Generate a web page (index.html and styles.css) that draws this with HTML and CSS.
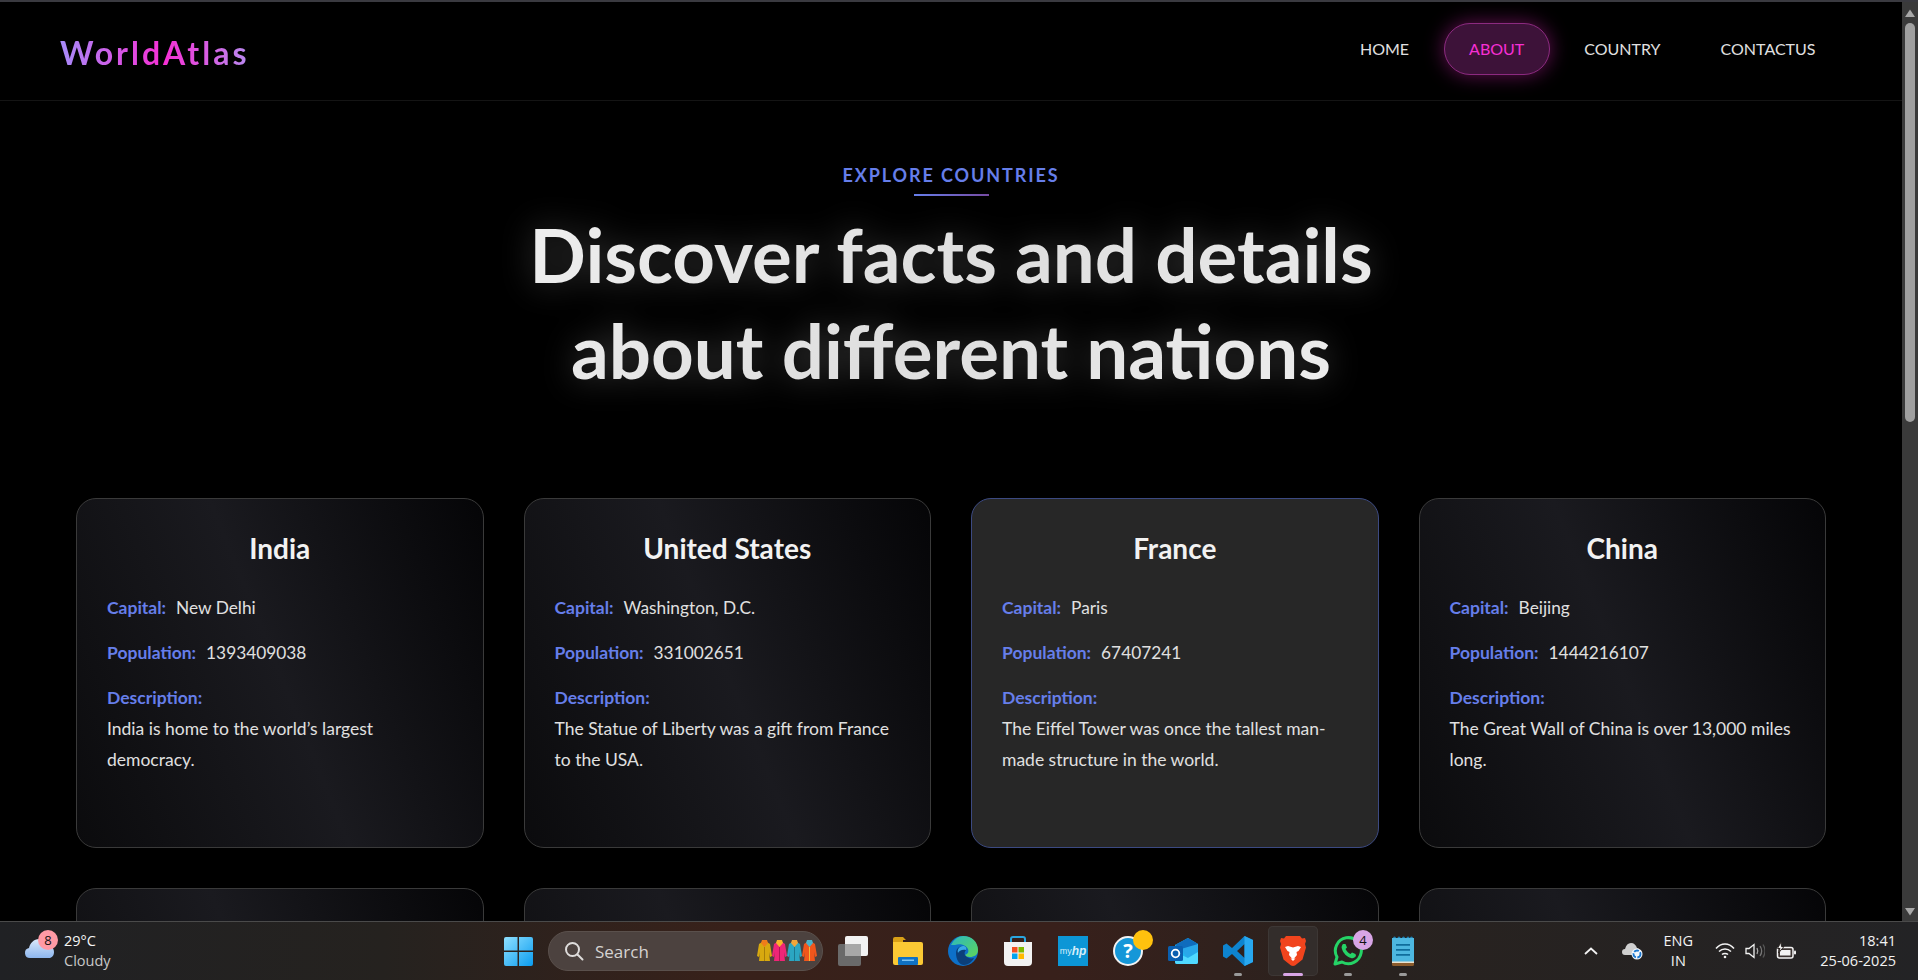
FILE: index.html
```html
<!DOCTYPE html>
<html>

<head>
    <title>WorldAtlas</title>
    <link rel="stylesheet" href="styles.css">
</head>

<body>
    <div class="browser">
        <div class="page">
            <header class="site-header">
                <div class="logo">WorldAtlas</div>
                <nav class="site-nav">
                    <a class="nav-link">HOME</a>
                    <a class="nav-link active">ABOUT</a>
                    <a class="nav-link">COUNTRY</a>
                    <a class="nav-link">CONTACTUS</a>
                </nav>
            </header>

            <section class="hero">
                <p class="eyebrow">EXPLORE COUNTRIES</p>
                <div class="eyebrow-line"></div>
                <h1>Discover facts and details<br>about different nations</h1>
            </section>

            <section class="country-grid">
                <article class="card">
                    <h2>India</h2>
                    <p class="row"><span class="label">Capital:</span><span>New Delhi</span></p>
                    <p class="row"><span class="label">Population:</span><span>1393409038</span></p>
                    <p class="label desc-label">Description:</p>
                    <p class="desc">India is home to the world’s largest democracy.</p>
                </article>
                <article class="card">
                    <h2>United States</h2>
                    <p class="row"><span class="label">Capital:</span><span>Washington, D.C.</span></p>
                    <p class="row"><span class="label">Population:</span><span>331002651</span></p>
                    <p class="label desc-label">Description:</p>
                    <p class="desc">The Statue of Liberty was a gift from France to the USA.</p>
                </article>
                <article class="card hover">
                    <h2>France</h2>
                    <p class="row"><span class="label">Capital:</span><span>Paris</span></p>
                    <p class="row"><span class="label">Population:</span><span>67407241</span></p>
                    <p class="label desc-label">Description:</p>
                    <p class="desc">The Eiffel Tower was once the tallest man-made structure in the world.</p>
                </article>
                <article class="card">
                    <h2>China</h2>
                    <p class="row"><span class="label">Capital:</span><span>Beijing</span></p>
                    <p class="row"><span class="label">Population:</span><span>1444216107</span></p>
                    <p class="label desc-label">Description:</p>
                    <p class="desc">The Great Wall of China is over 13,000 miles long.</p>
                </article>
                <article class="card"></article>
                <article class="card"></article>
                <article class="card"></article>
                <article class="card"></article>
            </section>
        </div>

        <div class="scrollbar">
            <svg class="arrow" width="10" height="8" viewBox="0 0 10 8"><path d="M5 0.5 10 8H0z" fill="#a8a8a8"/></svg>
            <div class="thumb"></div>
            <div class="track-rest"></div>
            <svg class="arrow" width="10" height="8" viewBox="0 0 10 8"><path d="M5 7.5 10 0H0z" fill="#a8a8a8"/></svg>
        </div>
    </div>

    <footer class="taskbar">
        <div class="tb-left">
            <div class="weather-icon">
                <svg width="32" height="24" viewBox="0 0 32 24">
                    <defs>
                        <linearGradient id="cloudFill" x1="0" y1="0" x2="0" y2="1">
                            <stop offset="0" stop-color="#dbe9fb"/>
                            <stop offset="1" stop-color="#8db6ee"/>
                        </linearGradient>
                    </defs>
                    <path d="M6 23a5 5 0 0 1-1-9.900C6 8 10 4 15 4c4 0 7 2 8.500 5.500C27 10 30 13 30 17c0 3.500-2 6-5 6z" fill="url(#cloudFill)"/>
                </svg>
                <span class="weather-badge">8</span>
            </div>
            <div class="weather-text">
                <span class="temp">29°C</span>
                <span class="sky">Cloudy</span>
            </div>
        </div>

        <div class="tb-center">
            <div class="tb-item">
                <svg width="29" height="29" viewBox="0 0 30 30">
                    <defs>
                        <linearGradient id="winFill" x1="0" y1="0" x2="1" y2="1">
                            <stop offset="0" stop-color="#8fe0ff"/>
                            <stop offset="1" stop-color="#0a9cf0"/>
                        </linearGradient>
                    </defs>
                    <path d="M2 0h12v14H0V2a2 2 0 0 1 2-2zM15.500 0H28a2 2 0 0 1 2 2v12H15.500zM0 15.500h14V30H2a2 2 0 0 1-2-2zM15.500 15.500H30V28a2 2 0 0 1-2 2H15.500z" fill="url(#winFill)"/>
                </svg>
            </div>

            <div class="search-box">
                <svg width="20" height="20" viewBox="0 0 20 20" fill="none" stroke="#dedcdb" stroke-width="2"><circle cx="8.500" cy="8.500" r="6.500"/><path d="M13.500 13.500 18.500 18.500" stroke-linecap="round"/></svg>
                <span class="search-text">Search</span>
                <svg class="coats" width="60" height="22" viewBox="0 0 60 22">
                    <g>
                        <path d="M5 2h5l3 2 2 12-2 1-1-5 1 9H2l1-9-1 5-2-1L2 4z" fill="#d8a90f"/>
                        <path d="M5 0h5l1 3-3.500 4L4 3z" fill="#ef7d1a"/>
                        <path d="M7 7h1v14H7z" fill="#a87f08"/>
                    </g>
                    <g transform="translate(15)">
                        <path d="M5 2h5l3 2 2 12-2 1-1-5 1 9H2l1-9-1 5-2-1L2 4z" fill="#ef2577"/>
                        <path d="M5 0h5l1 3-3.500 4L4 3z" fill="#f7b32b"/>
                        <path d="M7 7h1v14H7z" fill="#b01556"/>
                    </g>
                    <g transform="translate(30)">
                        <path d="M5 2h5l3 2 2 12-2 1-1-5 1 9H2l1-9-1 5-2-1L2 4z" fill="#2ba6c2"/>
                        <path d="M5 0h5l1 3-3.500 4L4 3z" fill="#f0a63a"/>
                        <path d="M7 7h1v14H7z" fill="#1b7890"/>
                    </g>
                    <g transform="translate(45)">
                        <path d="M5 2h5l3 2 2 12-2 1-1-5 1 9H2l1-9-1 5-2-1L2 4z" fill="#f0561c"/>
                        <path d="M5 0h5l1 3-3.500 4L4 3z" fill="#4ab3c9"/>
                        <path d="M7 7h1v14H7z" fill="#f2b63a"/>
                    </g>
                </svg>
            </div>

            <div class="tb-item">
                <svg width="30" height="30" viewBox="0 0 30 30">
                    <rect x="0" y="8" width="23" height="22" rx="2" fill="#6a6a6a"/>
                    <rect x="7" y="0" width="23" height="20" rx="2" fill="#f2f2f2"/>
                    <rect x="7" y="8" width="16" height="12" fill="#a8a8a8"/>
                </svg>
            </div>

            <div class="tb-item">
                <svg width="30" height="28" viewBox="0 0 30 28">
                    <path d="M0 2a2 2 0 0 1 2-2h8l3 3h-3v3H0z" fill="#d9a017"/>
                    <path d="M0 5h28a2 2 0 0 1 2 2v19a2 2 0 0 1-2 2H2a2 2 0 0 1-2-2z" fill="#fbc934"/>
                    <rect x="5" y="20" width="20" height="8" rx="1" fill="#0f72c4"/>
                    <rect x="9" y="22.500" width="12" height="1.500" fill="#7cc4f5"/>
                </svg>
            </div>

            <div class="tb-item">
                <svg width="30" height="30" viewBox="0 0 30 30">
                    <defs>
                        <linearGradient id="edgeTop" x1="0" y1="0" x2="1" y2="1">
                            <stop offset="0" stop-color="#2bb8c0"/>
                            <stop offset="1" stop-color="#5fd65a"/>
                        </linearGradient>
                    </defs>
                    <circle cx="15" cy="15" r="15" fill="#0d70c8"/>
                    <path d="M3 9C6 3 11 0 15 0c9 0 15 6 15 14 0 5-4 7-8 7-3 0-5-1-5-2 3-1 4-3 3-6-2-4-8-6-13-4-2 0-3 0-4 0z" fill="url(#edgeTop)"/>
                    <path d="M8 17c0-4 3-7 7-7 3 0 4 2 3 4-1 1-2 3-1 5 2 3 6 4 9 3-2 4-6 7-10 7-5 0-8-6-8-12z" fill="#0b3f7a"/>
                    <path d="M15 10c3 0 4 2 3 4-4-1-7 1-8 3-1-3 1-7 5-7z" fill="#39a9e8"/>
                </svg>
            </div>

            <div class="tb-item">
                <svg width="30" height="30" viewBox="0 0 30 30">
                    <path d="M8 6V3a2 2 0 0 1 2-2h10a2 2 0 0 1 2 2v3" fill="none" stroke="#2aa6e0" stroke-width="2"/>
                    <path d="M1 6h28v20a4 4 0 0 1-4 4H5a4 4 0 0 1-4-4z" fill="#f2f2f2"/>
                    <rect x="9" y="11" width="5.500" height="5.500" fill="#f25022"/>
                    <rect x="15.500" y="11" width="5.500" height="5.500" fill="#7fba00"/>
                    <rect x="9" y="17.500" width="5.500" height="5.500" fill="#00a4ef"/>
                    <rect x="15.500" y="17.500" width="5.500" height="5.500" fill="#ffb900"/>
                </svg>
            </div>

            <div class="tb-item">
                <div class="myhp"><span>my</span><em>hp</em></div>
            </div>

            <div class="tb-item">
                <div class="help-icon">
                    <svg width="30" height="30" viewBox="0 0 30 30">
                        <circle cx="15" cy="15" r="14" fill="#1597d8" stroke="#f2f2f2" stroke-width="2"/>
                    </svg>
                    <span class="help-mark">?</span>
                    <span class="help-dot"></span>
                </div>
            </div>

            <div class="tb-item">
                <svg width="30" height="28" viewBox="0 0 30 28">
                    <path d="M7 8 20 1l10 6v18a2 2 0 0 1-2 2H9a2 2 0 0 1-2-2z" fill="#1fb8ee"/>
                    <path d="M7 8 20 1l10 6-11 8z" fill="#0f6cbd"/>
                    <path d="M13 12 30 7v8l-11 6z" fill="#28a8ea"/>
                    <path d="M7 15l13 6 10-6v10a2 2 0 0 1-2 2H9a2 2 0 0 1-2-2z" fill="#50d9ff"/>
                    <rect x="0" y="9" width="15" height="15" rx="1.500" fill="#0a5fb0"/>
                    <circle cx="7.500" cy="16.500" r="3.800" fill="none" stroke="#fff" stroke-width="1.800"/>
                </svg>
            </div>

            <div class="tb-item">
                <svg width="30" height="30" viewBox="0 0 30 30">
                    <path d="M21.500 0 30 4v22l-8.500 4L9 18l-5.500 4.500L0 20.500v-11L3.500 7.500 9 12zM21.500 8 14 15l7.500 7z" fill="#0e84cf"/>
                    <path d="M21.500 0 30 4v22l-8.500 4z" fill="#28a8f0"/>
                </svg>
                <i class="run-dot"></i>
            </div>

            <div class="tb-item active-app">
                <svg width="26" height="30" viewBox="0 0 26 30">
                    <path d="M6 0h14l2 2.500 3-.5 1 3-1 3 1 3.500-3.500 12L15 29.500 13 30l-2-.5-7.500-6L0 11.500 1 8 0 5l1-3 3 .5z" fill="#f1441d"/>
                    <path d="M8 10l5 1.500 5-1.500 3 1-2.500 4-2 1 .5 3-3 3.500-1 .5-1-.5-3-3.500.5-3-2-1L5 11z" fill="#fff"/>
                    <path d="M10.500 22.500h5L13 25z" fill="#fff"/>
                </svg>
                <i class="run-dot active"></i>
            </div>

            <div class="tb-item">
                <div class="wa-icon">
                    <svg width="30" height="30" viewBox="0 0 30 30">
                        <path d="M2 28l2-7A13 13 0 1 1 9 26z" fill="none" stroke="#25d366" stroke-width="3" stroke-linejoin="round"/>
                        <path d="M10 8c-1 1-2 3-1 5 1 4 5 8 9 9 2 1 4-.5 5-2l-.5-2-3.500-1.500-1.500 1.500c-2-.5-4-3-5-5l1.500-1.500L12.500 8z" fill="#25d366"/>
                    </svg>
                    <span class="wa-badge">4</span>
                </div>
                <i class="run-dot"></i>
            </div>

            <div class="tb-item">
                <svg width="22" height="30" viewBox="0 0 22 30">
                    <rect x="0" y="2" width="22" height="25" fill="#4db7e0"/>
                    <path d="M0 27h22v1.500a1.500 1.500 0 0 1-1.500 1.500h-19A1.500 1.500 0 0 1 0 28.500z" fill="#8a5a2b"/>
                    <rect x="0" y="25.500" width="22" height="1.500" fill="#e8e2d0"/>
                    <path d="M1 2a1.500 1.500 0 0 1 3 0zM5.500 2a1.500 1.500 0 0 1 3 0zM10 2a1.500 1.500 0 0 1 3 0zM14.500 2a1.500 1.500 0 0 1 3 0zM18 2a1.500 1.500 0 0 1 3 0z" fill="#1f7fb0"/>
                    <path d="M4 8h14v1.800H4zM4 13h14v1.800H4zM4 18h14v1.800H4z" fill="#0f6d9c"/>
                </svg>
                <i class="run-dot"></i>
            </div>
        </div>

        <div class="tb-right">
            <svg class="tray-chevron" width="14" height="8" viewBox="0 0 14 8" fill="none" stroke="#f2f2f2" stroke-width="1.800"><path d="M1 7 7 1.500 13 7"/></svg>
            <svg class="tray-cloud" width="21" height="18" viewBox="0 0 21 18">
                <path d="M3 13a3 3 0 0 1 0-6C4 3 6 1 9 1c3 0 5 2 6 5 2 0 3 2 3 4l-4 3z" fill="#cfcfcf"/>
                <circle cx="15" cy="12" r="5.500" fill="#f2f7fd"/>
                <circle cx="15" cy="12" r="3.500" fill="none" stroke="#1b78d0" stroke-width="1.800" stroke-dasharray="5 1.500"/>
            </svg>
            <div class="tray-lang">ENG<br>IN</div>
            <svg class="tray-wifi" width="20" height="16" viewBox="0 0 20 16" fill="none" stroke="#f2f2f2" stroke-width="1.500">
                <path d="M1 5.500C6-.5 14-.5 19 5.500M4 8.500C7.500 5 12.500 5 16 8.500M7 11.500C8.500 10 11.500 10 13 11.500"/>
                <circle cx="10" cy="14" r="1.300" fill="#f2f2f2" stroke="none"/>
            </svg>
            <svg class="tray-sound" width="20" height="16" viewBox="0 0 20 16" fill="none" stroke="#f2f2f2" stroke-width="1.300">
                <path d="M1 5.500h3L9 1.500v13L4 10.500H1z"/>
                <path d="M12 5c1 2 1 4 0 6" stroke="#a8a8a8"/>
                <path d="M15 3c2 3 2 7 0 10" stroke="#777"/>
                <path d="M18 1.500c2.500 4 2.500 9 0 13" stroke="#555"/>
            </svg>
            <svg class="tray-battery" width="20" height="18" viewBox="0 0 20 18">
                <rect x="1.500" y="5.500" width="15.500" height="10.500" rx="2" fill="#3a3230" stroke="#f2f2f2" stroke-width="1.500"/>
                <rect x="4" y="8" width="10.500" height="5.500" fill="#f2f2f2"/>
                <rect x="18" y="8.500" width="2" height="4" rx="1" fill="#f2f2f2"/>
                <path d="M5 0 1.500 6.500H4L2.500 11 8 4.500H5.500z" fill="#f2f2f2" stroke="#2a2422" stroke-width="1"/>
            </svg>
            <div class="tray-clock">18:41<br>25-06-2025</div>
        </div>
    </footer>
</body>

</html>
```

FILE: styles.css
```css
* {
    box-sizing: border-box;
}

html {
    height: 980px;
    overflow: hidden;
}

body {
    margin: 0;
    height: 980px;
    display: flex;
    flex-direction: column;
    overflow: hidden;
    background: #000;
    font-family: "Lato", "Liberation Sans", sans-serif;
    color: #e0e0e0;
}

.browser {
    flex: 1;
    min-height: 0;
    display: flex;
    border-top: 2px solid #3a3a40;
}

.page {
    flex: 1;
    min-width: 0;
    overflow: hidden;
    background: #000;
}

/* header */
.site-header {
    height: 99px;
    padding: 0 61px 5px 60px;
    display: flex;
    align-items: center;
    justify-content: space-between;
    border-bottom: 1px solid #141414;
}

.logo {
    font-size: 32px;
    font-weight: 700;
    letter-spacing: 3px;
    background: linear-gradient(90deg, #a78bfa, #f72fd5 55%, #b98af0);
    -webkit-background-clip: text;
    background-clip: text;
    color: transparent;
    margin-top: 7px;
}

.site-nav {
    display: flex;
    gap: 9px;
}

.nav-link {
    height: 52px;
    padding: 0 24.5px;
    display: flex;
    align-items: center;
    font-size: 16px;
    color: #e0e0e0;
    border: 1px solid transparent;
    border-radius: 26px;
}

.nav-link.active {
    color: #f72fd5;
    background: #3d1239;
    border-color: #8c2a80;
    box-shadow: 0 0 20px rgba(240, 40, 200, 0.42);
}

/* hero */
.hero {
    text-align: center;
    padding-top: 62px;
}

.eyebrow {
    margin: 0;
    font-size: 18px;
    line-height: 24px;
    font-weight: 700;
    letter-spacing: 1.9px;
    color: #667eea;
}

.eyebrow-line {
    width: 75px;
    height: 2px;
    margin: 7px auto 0;
    background: linear-gradient(90deg, #667eea, #764ba2);
}

h1 {
    margin: 10px 0 0;
    font-size: 74.5px;
    line-height: 96px;
    font-weight: 700;
    background: linear-gradient(135deg, #fff, #dedede 50%, #fff);
    -webkit-background-clip: text;
    background-clip: text;
    color: transparent;
    filter: drop-shadow(0 0 16px rgba(255, 255, 255, 0.24));
}

/* cards */
.country-grid {
    margin-top: 100px;
    padding: 0 76px;
    display: grid;
    grid-template-columns: repeat(4, 1fr);
    gap: 40px;
}

.card {
    height: 350px;
    padding: 30px 30px;
    border: 1px solid #3a3a3a;
    border-radius: 20px;
    background: linear-gradient(68deg, #0b0b0d, #1a1a1f 50%, #050507);
}

.card.hover {
    background: #272727;
    border-color: #3c4a82;
}

.card h2 {
    margin: 0 0 26px;
    font-size: 28px;
    line-height: 38px;
    font-weight: 700;
    text-align: center;
    color: #f2f2f2;
}

.row {
    margin: 0 0 15px;
    display: flex;
    gap: 10px;
    font-size: 17.3px;
    line-height: 30px;
}

.label {
    font-size: 17.5px;
    font-weight: 700;
    color: #667eea;
}

.desc-label {
    margin: 0;
    line-height: 30px;
}

.desc {
    margin: 0;
    font-size: 17.5px;
    line-height: 31px;
    color: #e0e0e0;
}

/* fake scrollbar of the browser */
.scrollbar {
    width: 16px;
    display: flex;
    flex-direction: column;
    align-items: center;
    background: #3a3a3a;
    padding: 7px 0 5px;
}

.arrow {
    flex: none;
}

.thumb {
    width: 10px;
    height: 399px;
    margin-top: 6px;
    border-radius: 5px;
    background: #a0a0a0;
}

.track-rest {
    flex: 1;
}

/* windows taskbar */
.taskbar {
    height: 59px;
    flex: none;
    display: grid;
    grid-template-columns: 1fr auto 1fr;
    align-items: center;
    border-top: 1px solid #4a4a4a;
    background: linear-gradient(90deg, #202124, #25221f 20%, #38211a 38%, #38201b 55%, #28221f 72%, #232325);
    font-family: "Open Sans", "Noto Sans", sans-serif;
    font-size: 14.5px;
}

.tb-left {
    display: flex;
    align-items: center;
    padding-left: 24px;
}

.weather-icon {
    position: relative;
    width: 32px;
    height: 24px;
    margin-top: -9px;
}

.weather-badge {
    position: absolute;
    top: -5px;
    right: -2px;
    width: 20px;
    height: 20px;
    border-radius: 50%;
    background: #ff9aa5;
    color: #111;
    text-align: center;
    font-size: 13px;
    line-height: 20px;
}

.weather-text {
    margin-left: 8px;
    display: flex;
    flex-direction: column;
    line-height: 20px;
}

.temp {
    color: #f5f5f5;
}

.sky {
    color: #c8c8c8;
}

.tb-center {
    display: flex;
    align-items: center;
    gap: 5px;
    margin-left: 3px;
}

.tb-item {
    position: relative;
    width: 50px;
    height: 50px;
    display: flex;
    align-items: center;
    justify-content: center;
    border-radius: 5px;
}

.tb-item.active-app {
    background: #332d2b;
    box-shadow: inset 0 0 0 1px #3d3735;
}

.search-box {
    width: 275px;
    height: 40px;
    padding: 0 5px 0 15px;
    display: flex;
    align-items: center;
    border-radius: 20px;
    border: 1px solid #5a504c;
    background: #4c423f;
}

.search-text {
    flex: 1;
    margin-left: 11px;
    font-size: 17px;
    color: #d6d3d2;
}

.run-dot {
    position: absolute;
    bottom: 0;
    left: 50%;
    width: 8px;
    height: 3px;
    margin-left: -4px;
    border-radius: 2px;
    background: #9a9a9a;
}

.run-dot.active {
    width: 20px;
    margin-left: -10px;
    background: #d8a5e6;
}

.myhp {
    width: 30px;
    height: 30px;
    display: flex;
    align-items: center;
    justify-content: center;
    background: #0c96d6;
    color: #d5eefa;
    font-size: 9px;
    font-family: "Liberation Sans", sans-serif;
}

.myhp em {
    font-size: 12px;
    font-weight: 700;
}

.help-icon,
.wa-icon {
    position: relative;
    width: 30px;
    height: 30px;
}

.help-mark {
    position: absolute;
    inset: 0;
    text-align: center;
    line-height: 30px;
    font-size: 20px;
    font-weight: 700;
    color: #fff;
}

.help-dot {
    position: absolute;
    top: -6px;
    right: -10px;
    width: 20px;
    height: 20px;
    border-radius: 50%;
    background: #ffc10e;
}

.wa-badge {
    position: absolute;
    top: -6px;
    right: -10px;
    width: 20px;
    height: 20px;
    border-radius: 50%;
    background: #d8a5e6;
    color: #111;
    text-align: center;
    font-size: 13px;
    line-height: 20px;
}

.tb-right {
    display: flex;
    align-items: center;
    justify-content: flex-end;
    padding-right: 22px;
    color: #f2f2f2;
}

.tray-cloud {
    margin-left: 24px;
}

.tray-lang {
    width: 40px;
    margin-left: 15.5px;
    text-align: center;
    line-height: 20px;
}

.tray-wifi {
    margin-left: 17px;
}

.tray-sound {
    margin-left: 10px;
}

.tray-battery {
    margin-left: 11px;
}

.tray-clock {
    margin-left: 24px;
    text-align: right;
    line-height: 20px;
}
```
